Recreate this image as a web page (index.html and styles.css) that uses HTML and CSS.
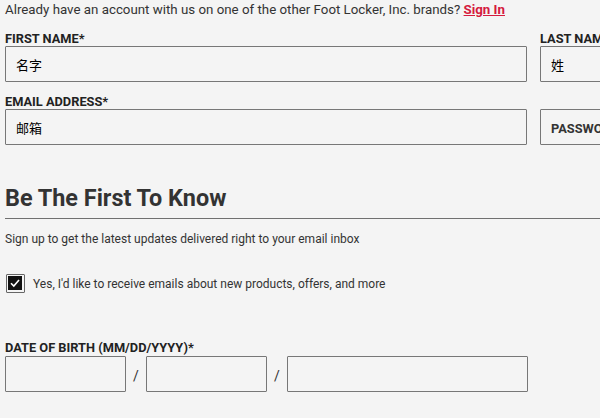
FILE: index.html
```html
<!DOCTYPE html>
<html lang="en">
<head>
    <meta charset="UTF-8">
    <title>Create Account</title>
    <link rel="stylesheet" href="styles.css">
</head>
<body>
    <div class="form-wrap">
        <p class="intro">Already have an account with us on one of the other Foot Locker, Inc. brands? <a href="#" class="sign-in">Sign In</a></p>
        <div class="field-row">
            <div class="field">
                <label>FIRST NAME*</label>
                <input type="text" value="名字">
            </div>
            <div class="field">
                <label>LAST NAME*</label>
                <input type="text" value="姓">
            </div>
        </div>
        <div class="field-row">
            <div class="field">
                <label>EMAIL ADDRESS*</label>
                <input type="text" value="邮箱">
            </div>
            <div class="field">
                <label>&nbsp;</label>
                <input type="text" class="pw" placeholder="PASSWORD*">
            </div>
        </div>
        <h2 class="section-title">Be The First To Know</h2>
        <p class="section-sub">Sign up to get the latest updates delivered right to your email inbox</p>
        <label class="check-row">
            <span class="check-box">
                <svg width="14" height="14" viewBox="0 0 14 14"><rect width="14" height="14" fill="#111"/><path d="M3 7.2 L5.8 10 L11 4" stroke="#fff" stroke-width="1.6" fill="none"/></svg>
            </span>
            <span>Yes, I'd like to receive emails about new products, offers, and more</span>
        </label>
        <div class="dob">
            <label>DATE OF BIRTH (MM/DD/YYYY)*</label>
            <div class="dob-inputs">
                <input type="text" class="dob-short">
                <span class="slash">/</span>
                <input type="text" class="dob-short">
                <span class="slash">/</span>
                <input type="text" class="dob-long">
            </div>
        </div>
    </div>
</body>
</html>
```

FILE: styles.css
```css
html, body {
    margin: 0;
    height: 100%;
    overflow: hidden;
}
body {
    background: #f4f4f4;
    color: #333;
    font-family: Roboto, "Noto Sans CJK SC", sans-serif;
}
.form-wrap {
    padding: 0 0 0 5px;
    width: 800px;
}
.intro {
    margin: 0;
    padding-top: 1px;
    font-size: 13.3px;
    line-height: 17px;
    color: #333;
}
.sign-in {
    color: #d51a3e;
    font-weight: bold;
    text-decoration: underline;
}
.field-row {
    display: grid;
    grid-template-columns: 522px 240px;
    column-gap: 13px;
    margin-top: 14px;
}
.field-row + .field-row {
    margin-top: 13px;
}
.field label {
    display: block;
    font-size: 12.8px;
    font-weight: bold;
    line-height: 14px;
    color: #222;
}
.field input, .dob input {
    box-sizing: border-box;
    width: 100%;
    height: 36px;
    margin: 0;
    border: 1px solid #777;
    border-radius: 1px;
    background: #f4f4f4;
    padding: 0 10px;
    font-family: "Noto Sans CJK SC", Roboto, sans-serif;
    font-size: 13px;
    color: #000;
    outline: none;
}
.field input.pw::placeholder {
    color: #333;
    font-family: Roboto, sans-serif;
    font-weight: bold;
    font-size: 12.8px;
}
.section-title {
    margin: 39px 0 0;
    font-size: 23.4px;
    line-height: 28px;
    font-weight: bold;
    color: #333;
    padding-bottom: 6px;
    border-bottom: 1px solid #707070;
}
.section-sub {
    margin: 12px 0 0;
    font-size: 12px;
    line-height: 16px;
    color: #333;
}
.check-row {
    display: flex;
    align-items: center;
    gap: 8px;
    margin-top: 27px;
    font-size: 12px;
    color: #333;
}
.check-box {
    box-sizing: border-box;
    width: 19px;
    height: 19px;
    border: 1px solid #666;
    border-radius: 1px;
    padding: 1px;
    display: flex;
    margin-left: 1px;
}
.dob {
    margin-top: 48px;
}
.dob label {
    display: block;
    font-size: 12.8px;
    font-weight: bold;
    line-height: 14px;
    color: #222;
}
.dob-inputs {
    display: flex;
    align-items: center;
    margin-top: 1px;
}
.dob-inputs .dob-short {
    width: 121px;
}
.dob-inputs .dob-long {
    width: 241px;
}
.slash {
    width: 20px;
    text-align: center;
    font-size: 14px;
    color: #333;
    padding-top: 4px;
}
```
